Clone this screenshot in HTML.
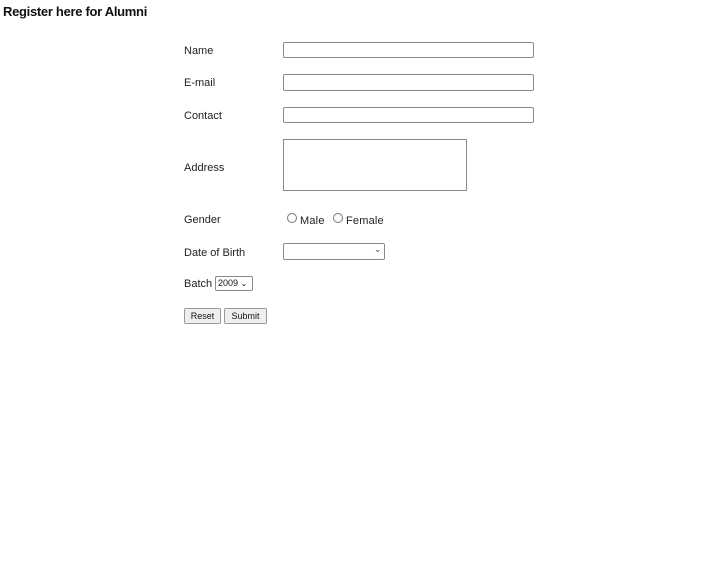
<!DOCTYPE html>
<html><head><style>
body{margin:0;width:720px;height:586px;background:#fff;font-family:"Liberation Sans",sans-serif;color:#111;position:relative;overflow:hidden}
.a{position:absolute}
h1{position:absolute;left:3px;top:4px;margin:0;font-size:13px;font-weight:bold;letter-spacing:-0.3px}
.l{font-size:11px;color:#222}
.box{border:1px solid #8a8a8a;border-radius:2px;background:#fff;box-sizing:border-box}
.btn{border:1px solid #999;border-radius:2px;background:#efefef;font-size:9px;box-sizing:border-box;text-align:center;line-height:14px}
.r{width:10px;height:10px;border:1px solid #777;border-radius:50%;box-sizing:border-box}
</style></head><body>
<h1>Register here for Alumni</h1>
<div class="a l" style="left:184px;top:45px">Name</div>
<div class="a box" style="left:283px;top:42px;width:251px;height:16px"></div>
<div class="a l" style="left:184px;top:77px">E-mail</div>
<div class="a box" style="left:283px;top:74px;width:251px;height:17px"></div>
<div class="a l" style="left:184px;top:110px">Contact</div>
<div class="a box" style="left:283px;top:107px;width:251px;height:16px"></div>
<div class="a l" style="left:184px;top:162px">Address</div>
<div class="a box" style="left:283px;top:139px;width:184px;height:52px;border-radius:0"></div>
<div class="a l" style="left:184px;top:214px">Gender</div>
<div class="a r" style="left:287px;top:213px"></div>
<div class="a l" style="left:300px;top:215px;letter-spacing:0.2px">Male</div>
<div class="a r" style="left:333px;top:213px"></div>
<div class="a l" style="left:346px;top:215px;letter-spacing:0.2px">Female</div>
<div class="a l" style="left:184px;top:247px">Date of Birth</div>
<div class="a box" style="left:283px;top:243px;width:102px;height:17px"></div>
<div class="a" style="left:374px;top:244px;font-size:9px;color:#444">&#8964;</div>
<div class="a l" style="left:184px;top:278px">Batch</div>
<div class="a box" style="left:215px;top:276px;width:38px;height:15px;font-size:9px;line-height:13px;padding-left:2px">2009 <span style="font-size:8px">&#8964;</span></div>
<div class="a btn" style="left:184px;top:308px;width:37px;height:16px">Reset</div>
<div class="a btn" style="left:224px;top:308px;width:43px;height:16px">Submit</div>
</body></html>
